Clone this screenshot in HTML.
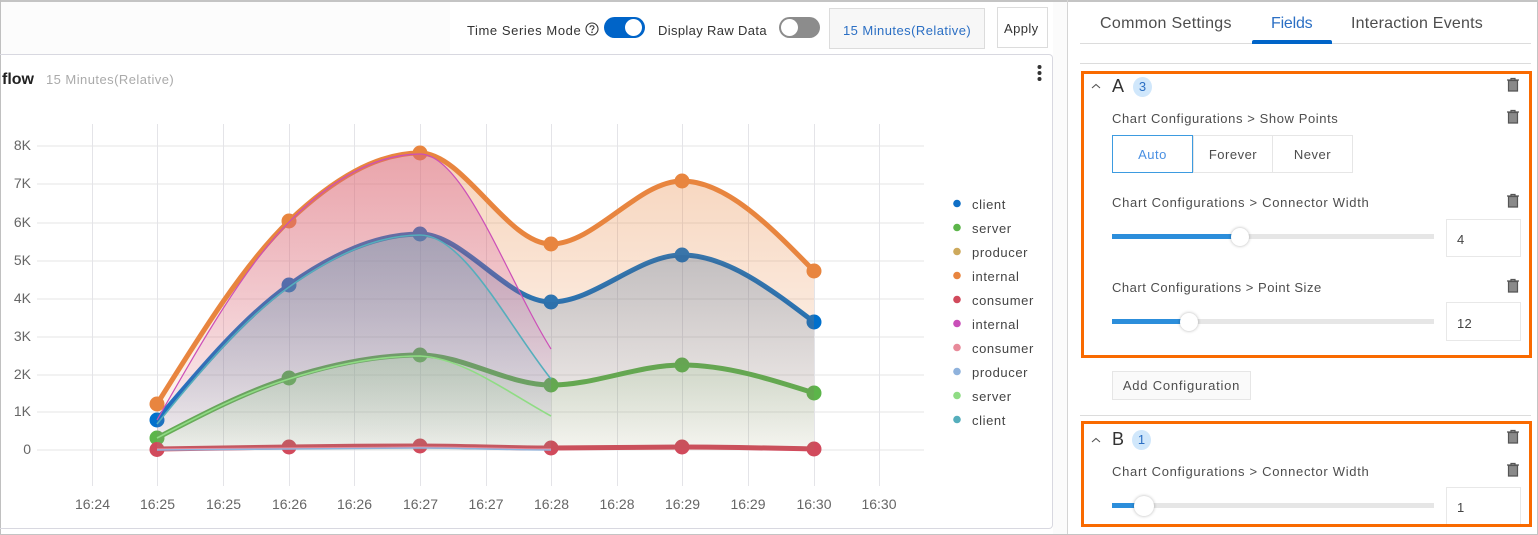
<!DOCTYPE html>
<html lang="en"><head><meta charset="utf-8"><title>Chart settings</title>
<style>
*{box-sizing:border-box}
html,body{margin:0;padding:0;width:1538px;height:535px;overflow:hidden;background:#fff;font-family:"Liberation Sans",sans-serif;color:#444}
.a{position:absolute;white-space:nowrap}
.t{position:absolute;white-space:nowrap;font-size:13px;line-height:18px;letter-spacing:.65px;color:#4d4d4d}
.tab{position:absolute;top:14px;font-size:16px;line-height:20px;color:#4d4d4d;white-space:nowrap}
.box{position:absolute;left:1081px;width:451px;border:3px solid #f96a00}
.track{position:absolute;left:1112px;width:322px;height:5px;background:#e6e6e6}
.fill{position:absolute;left:0;top:0;height:5px;background:#2c8edb}
.knob{position:absolute;width:18px;height:18px;border-radius:50%;background:#fff;box-shadow:0 0 3px rgba(0,0,0,.3);top:-6.5px}
.inp{position:absolute;left:1446px;width:75px;background:#fff;border:1px solid #e8e8e8;font-size:13px;padding-left:10px;color:#444;letter-spacing:.3px}
.seg{position:absolute;top:135px;height:38px;border:1px solid #e6e6e6;text-align:center;line-height:38px;font-size:13px;letter-spacing:.5px;color:#4d4d4d}
.tr{position:absolute;left:1506px}
</style></head><body>
<div class="a" style="left:0;top:2px;width:450px;height:52px;background:#fcfcfc"></div>
<div class="a" style="left:1053px;top:2px;width:14px;height:532px;background:#fbfbfb"></div>
<div class="a" style="left:0;top:0;width:1538px;height:2px;background:#c4c4c4"></div>
<div class="a" style="left:0;top:0;width:1px;height:535px;background:#c0c0c0"></div>
<div class="a" style="left:1067px;top:0;width:1px;height:535px;background:#d4d4d4"></div>
<div class="a" style="left:1537px;top:0;width:1px;height:535px;background:#c4c4c4"></div>
<div class="a" style="left:0;top:534px;width:1538px;height:1px;background:#c4c4c4"></div>
<div class="a" style="left:0;top:54px;width:1053px;height:475px;border:1px solid #d8d8e0;border-left:0;border-radius:0 4px 4px 0"></div>

<span class="t" style="left:467px;top:22px;color:#333;letter-spacing:.58px">Time Series Mode</span>
<svg class="a" style="left:585px;top:22px" width="14" height="14" viewBox="0 0 14 14"><circle cx="7" cy="7" r="6" fill="none" stroke="#333" stroke-width="1.1"/><path d="M5 5.4C5 3.2 9 3.2 9 5.4 9 6.8 7 6.8 7 8.4" fill="none" stroke="#333" stroke-width="1.1"/><circle cx="7" cy="10.2" r=".8" fill="#333"/></svg>
<div class="a" style="left:604px;top:17px;width:41px;height:21px;border-radius:11px;background:#0064c8"></div>
<div class="a" style="left:625px;top:19px;width:17px;height:17px;border-radius:50%;background:#fff"></div>
<span class="t" style="left:658px;top:22px;color:#333;letter-spacing:.35px">Display Raw Data</span>
<div class="a" style="left:779px;top:17px;width:41px;height:21px;border-radius:11px;background:#8c8c8c"></div>
<div class="a" style="left:781px;top:19px;width:17px;height:17px;border-radius:50%;background:#fff"></div>
<div class="a" style="left:829px;top:8px;width:156px;height:41px;background:#f7f7f7;border:1px solid #dcdcdc"></div>
<span class="t" style="left:843px;top:22px;color:#2b6fc4;letter-spacing:.45px">15 Minutes(Relative)</span>
<div class="a" style="left:997px;top:7px;width:51px;height:41px;background:#fff;border:1px solid #dcdcdc"></div>
<span class="t" style="left:1004px;top:20px;color:#333;letter-spacing:.4px">Apply</span>

<span class="a" style="left:2px;top:70px;font-size:16px;line-height:20px;font-weight:bold;color:#222">flow</span>
<span class="t" style="left:46px;top:71px;color:#aaa;letter-spacing:.45px">15 Minutes(Relative)</span>
<svg class="a" style="left:1034px;top:62px" width="10" height="22"><circle cx="5.5" cy="5" r="2" fill="#333"/><circle cx="5.5" cy="11" r="2" fill="#333"/><circle cx="5.5" cy="17" r="2" fill="#333"/></svg>

<svg class="a" style="left:0;top:0" width="1060" height="530" viewBox="0 0 1060 530">
<defs>
<linearGradient id="go" gradientUnits="userSpaceOnUse" x1="0" y1="146" x2="0" y2="450"><stop offset="0" stop-color="#e8853f" stop-opacity=".36"/><stop offset="1" stop-color="#e8853f" stop-opacity=".04"/></linearGradient>
<linearGradient id="gb" gradientUnits="userSpaceOnUse" x1="0" y1="146" x2="0" y2="450"><stop offset="0" stop-color="#2a5f95" stop-opacity=".4"/><stop offset="1" stop-color="#2a5f95" stop-opacity=".02"/></linearGradient>
<linearGradient id="gg" gradientUnits="userSpaceOnUse" x1="0" y1="146" x2="0" y2="450"><stop offset="0" stop-color="#5cb54a" stop-opacity=".38"/><stop offset="1" stop-color="#5cb54a" stop-opacity=".03"/></linearGradient>
<linearGradient id="gm" gradientUnits="userSpaceOnUse" x1="0" y1="146" x2="0" y2="450"><stop offset="0" stop-color="#d4558f" stop-opacity=".38"/><stop offset="1" stop-color="#cc4fb8" stop-opacity=".02"/></linearGradient>
<linearGradient id="gt" gradientUnits="userSpaceOnUse" x1="0" y1="146" x2="0" y2="450"><stop offset="0" stop-color="#55aebc" stop-opacity=".34"/><stop offset="1" stop-color="#55aebc" stop-opacity=".02"/></linearGradient>
<linearGradient id="gl" gradientUnits="userSpaceOnUse" x1="0" y1="146" x2="0" y2="450"><stop offset="0" stop-color="#8fdc84" stop-opacity=".36"/><stop offset="1" stop-color="#8fdc84" stop-opacity=".03"/></linearGradient>
</defs>
<g stroke="#eeeeee" stroke-width="1.6"><path d="M37 146H924M37 184H924M37 223H924M37 261H924M37 299H924M37 337H924M37 375H924M37 412H924M37 450H924"/></g>
<g stroke="#e4e4e8" stroke-width="1"><path d="M92.5 124V486M157.5 124V486M223.5 124V486M289.5 124V486M354.5 124V486M420.5 124V486M486.5 124V486M551.5 124V486M617.5 124V486M682.5 124V486M748.5 124V486M814.5 124V486M879.5 124V486"/></g>

<!-- main series lines + points -->
<g fill="none" stroke-width="5">
<path stroke="#e8853f" d="M157,404C201,333.5 245,263 289,221C332.7,179.4 376.3,153 420,153C463.7,153 507.3,244 551,244C594.7,244 638.3,181 682,181C726,181 770,226 814,271"/>
<path stroke="#0070cc" d="M157,420C201,368 245,316 289,285C332.7,254.2 376.3,234 420,234C463.7,234 507.3,302 551,302C594.7,302 638.3,255 682,255C726,255 770,288.5 814,322"/>
<path stroke="#5cb54a" d="M157,438C201,415 245,391.9 289,378C332.7,364.2 376.3,355 420,355C463.7,355 507.3,385 551,385C594.7,385 638.3,365 682,365C726,365 770,379 814,393"/>
<path stroke="#d14a5c" d="M157,449C201,448 245,447.5 289,447C333,446.5 376,446 420,446C464,446 507,448 551,448C595,448 638,447 682,447C726,447 770,448 814,449"/>
</g>
<g fill="#e8853f"><circle cx="157" cy="404" r="7.5"/><circle cx="289" cy="221" r="7.5"/><circle cx="420" cy="153" r="7.5"/><circle cx="551" cy="244" r="7.5"/><circle cx="682" cy="181" r="7.5"/><circle cx="814" cy="271" r="7.5"/></g>
<g fill="#0070cc"><circle cx="157" cy="420" r="7.5"/><circle cx="289" cy="285" r="7.5"/><circle cx="420" cy="234" r="7.5"/><circle cx="551" cy="302" r="7.5"/><circle cx="682" cy="255" r="7.5"/><circle cx="814" cy="322" r="7.5"/></g>
<g fill="#5cb54a"><circle cx="157" cy="438" r="7.5"/><circle cx="289" cy="378" r="7.5"/><circle cx="420" cy="355" r="7.5"/><circle cx="551" cy="385" r="7.5"/><circle cx="682" cy="365" r="7.5"/><circle cx="814" cy="393" r="7.5"/></g>
<g fill="#d14a5c"><circle cx="157" cy="449.500" r="7.5"/><circle cx="289" cy="447" r="7.5"/><circle cx="420" cy="446" r="7.5"/><circle cx="551" cy="448" r="7.5"/><circle cx="682" cy="447" r="7.5"/><circle cx="814" cy="449" r="7.5"/></g>

<!-- main fills -->
<path fill="url(#go)" d="M157,404C201,333.5 245,263 289,221C332.7,179.4 376.3,153 420,153C463.7,153 507.3,244 551,244C594.7,244 638.3,181 682,181C726,181 770,226 814,271V450H157Z"/>
<path fill="url(#gb)" d="M157,420C201,368 245,316 289,285C332.7,254.2 376.3,234 420,234C463.7,234 507.3,302 551,302C594.7,302 638.3,255 682,255C726,255 770,288.5 814,322V450H157Z"/>
<path fill="url(#gg)" d="M157,438C201,415 245,391.9 289,378C332.7,364.2 376.3,355 420,355C463.7,355 507.3,385 551,385C594.7,385 638.3,365 682,365C726,365 770,379 814,393V450H157Z"/>

<!-- second series fills + thin lines -->
<path fill="url(#gm)" d="M157,420C201,343 245,266 289,222C332.7,178 376.3,154 420,154C463.7,154 507.300,279 551,349V450H157Z"/>
<path fill="url(#gt)" d="M157,424C201,370 245,318 289,287C332.7,256 376.3,235 420,235C463.7,235 507.300,324 551,379V450H157Z"/>
<path fill="url(#gl)" d="M157,438C201,415 245,392 289,379C332.7,365 376.3,356 420,356C463,358 507.300,392 551,416V450H157Z"/>
<g fill="none" stroke-width="1.2">
<path stroke="#cc4fb8" d="M157,420C201,343 245,266 289,222C332.7,178 376.3,154 420,154C463.7,154 507.300,279 551,349"/>
<path stroke="#55aebc" stroke-width="1.6" d="M157,424C201,370 245,318 289,287C332.7,256 376.3,235 420,235C463.7,235 507.300,324 551,379"/>
<path stroke="#8fdc84" stroke-width="1.6" d="M157,438C201,415 245,392 289,379C332.7,365 376.3,356 420,356C463,358 507.300,392 551,416"/>
<path stroke="#e88a9a" d="M157,449C245,448 333,447 420,447C464,447 507,449 551,449"/>
<path stroke="#8fb2dc" stroke-width="1.4" d="M157,450C245,449 333,448 420,448C464,448 507,450 551,450"/>
</g>

<g font-family="Liberation Sans, sans-serif" font-size="14" fill="#666" text-anchor="end">
<text x="31" y="150">8K</text><text x="31" y="188">7K</text><text x="31" y="227">6K</text><text x="31" y="265">5K</text><text x="31" y="303">4K</text><text x="31" y="341">3K</text><text x="31" y="379">2K</text><text x="31" y="416">1K</text><text x="31" y="454">0</text>
</g>
<g font-family="Liberation Sans, sans-serif" font-size="14" fill="#666" text-anchor="middle">
<text x="92.500" y="509">16:24</text><text x="157.500" y="509">16:25</text><text x="223.500" y="509">16:25</text><text x="289.500" y="509">16:26</text><text x="354.500" y="509">16:26</text><text x="420.500" y="509">16:27</text><text x="486" y="509">16:27</text><text x="551.500" y="509">16:28</text><text x="617" y="509">16:28</text><text x="682.500" y="509">16:29</text><text x="748" y="509">16:29</text><text x="814" y="509">16:30</text><text x="879" y="509">16:30</text>
</g>
<g><circle cx="957" cy="203.500" r="3.800" fill="#0f6fc6"/><circle cx="957" cy="227.500" r="3.800" fill="#5cb54a"/><circle cx="957" cy="251.500" r="3.800" fill="#cda95c"/><circle cx="957" cy="275.500" r="3.800" fill="#e8853f"/><circle cx="957" cy="299.500" r="3.800" fill="#d14a5c"/><circle cx="957" cy="323.500" r="3.800" fill="#c94fb8"/><circle cx="957" cy="347.500" r="3.800" fill="#e88a9a"/><circle cx="957" cy="371.500" r="3.800" fill="#8fb2dc"/><circle cx="957" cy="395.500" r="3.800" fill="#8fdc84"/><circle cx="957" cy="419.500" r="3.800" fill="#55aebc"/></g>
<g font-family="Liberation Sans, sans-serif" font-size="13" fill="#444" letter-spacing=".6">
<text x="972" y="209">client</text><text x="972" y="233">server</text><text x="972" y="257">producer</text><text x="972" y="281">internal</text><text x="972" y="305">consumer</text><text x="972" y="329">internal</text><text x="972" y="353">consumer</text><text x="972" y="377">producer</text><text x="972" y="401">server</text><text x="972" y="425">client</text>
</g>
</svg>

<!-- right panel -->
<span class="tab" style="left:1100px;letter-spacing:.31px">Common Settings</span>
<span class="tab" style="left:1271px;color:#2b6fc4;letter-spacing:-.2px">Fields</span>
<span class="tab" style="left:1351px;letter-spacing:.22px">Interaction Events</span>
<div class="a" style="left:1080px;top:43px;width:451px;height:1px;background:#dcdcdc"></div>
<div class="a" style="left:1252px;top:40px;width:80px;height:4px;background:#0064c8;border-radius:2px 2px 0 0"></div>
<div class="a" style="left:1080px;top:63px;width:451px;height:1px;background:#dcdcdc"></div>

<div class="box" style="top:71px;height:287px"></div>
<div class="box" style="top:421px;height:106px"></div>

<svg class="a" style="left:1090px;top:81px" width="12" height="10"><path d="M2 7L6 3.500 10 7" fill="none" stroke="#555" stroke-width="1.100"/></svg>
<span class="a" style="left:1112px;top:75px;font-size:18px;line-height:22px;color:#333">A</span>
<div class="a" style="left:1133px;top:77px;width:19px;height:20px;border-radius:50%;background:#d0e7fb;color:#2b6fc4;font-size:13px;line-height:20px;text-align:center">3</div>

<span class="t" style="left:1112px;top:110px;letter-spacing:.59px">Chart Configurations &gt; Show Points</span>
<div class="seg" style="left:1193px;width:80px">Forever</div>
<div class="seg" style="left:1272px;width:81px">Never</div>
<div class="seg" style="left:1112px;width:81px;border-color:#3d9be0;color:#4a90e2">Auto</div>

<span class="t" style="left:1112px;top:194px;letter-spacing:.7px">Chart Configurations &gt; Connector Width</span>
<div class="track" style="top:234px"><div class="fill" style="width:128px"></div><div class="knob" style="left:119px"></div></div>
<div class="inp" style="top:219px;height:38px;line-height:40px">4</div>

<span class="t" style="left:1112px;top:279px;letter-spacing:.52px">Chart Configurations &gt; Point Size</span>
<div class="track" style="top:319px"><div class="fill" style="width:77px"></div><div class="knob" style="left:68px"></div></div>
<div class="inp" style="top:302px;height:39px;line-height:41px">12</div>

<div class="a" style="left:1112px;top:371px;width:139px;height:29px;background:#fafafa;border:1px solid #e6e6e6;font-size:13px;line-height:28px;text-align:center;letter-spacing:.78px;color:#4d4d4d">Add Configuration</div>
<div class="a" style="left:1080px;top:415px;width:451px;height:1px;background:#dcdcdc"></div>

<svg class="a" style="left:1090px;top:435px" width="12" height="10"><path d="M2 7L6 3.500 10 7" fill="none" stroke="#555" stroke-width="1.100"/></svg>
<span class="a" style="left:1112px;top:428px;font-size:18px;line-height:22px;color:#333">B</span>
<div class="a" style="left:1132px;top:430px;width:19px;height:20px;border-radius:50%;background:#d0e7fb;color:#2b6fc4;font-size:13px;line-height:20px;text-align:center">1</div>
<span class="t" style="left:1112px;top:463px;letter-spacing:.7px">Chart Configurations &gt; Connector Width</span>
<div class="track" style="top:503px"><div class="fill" style="width:32px"></div><div class="knob" style="left:22px;width:20px;height:20px;top:-7.500px"></div></div>
<div class="inp" style="top:487px;height:37px;line-height:40px;border-bottom:0">1</div>

<svg width="0" height="0" style="position:absolute"><defs><g id="tr"><path d="M1 3H13M5 3V1.500H9V3" fill="none" stroke="#555" stroke-width="1.200"/><path d="M2.500 3.500H11.500V14H2.500Z" fill="#8a8a8a" stroke="#555" stroke-width="1.200"/></g></defs></svg>
<svg class="tr" style="top:77px" width="14" height="15"><use href="#tr"/></svg>
<svg class="tr" style="top:109px" width="14" height="15"><use href="#tr"/></svg>
<svg class="tr" style="top:193px" width="14" height="15"><use href="#tr"/></svg>
<svg class="tr" style="top:278px" width="14" height="15"><use href="#tr"/></svg>
<svg class="tr" style="top:429px" width="14" height="15"><use href="#tr"/></svg>
<svg class="tr" style="top:462px" width="14" height="15"><use href="#tr"/></svg>
</body></html>
